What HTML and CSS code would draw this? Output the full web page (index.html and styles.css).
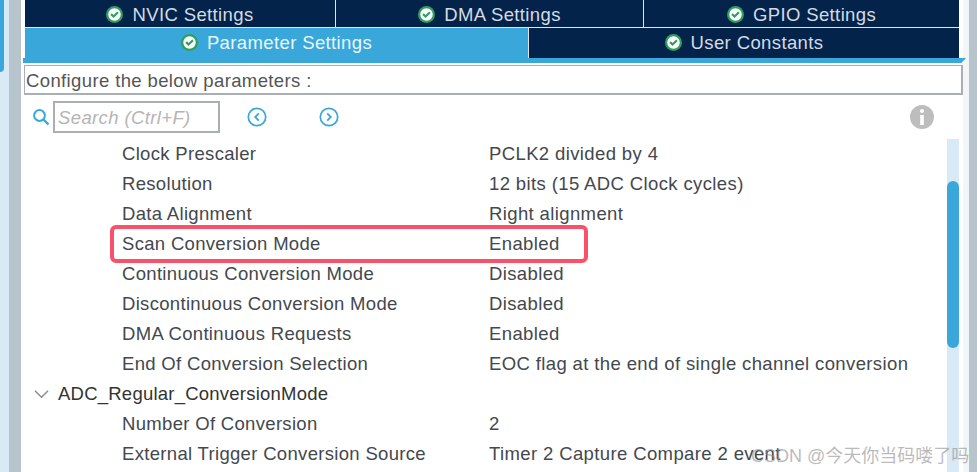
FILE: index.html
```html
<!DOCTYPE html>
<html lang="en">
<head>
  <meta charset="UTF-8"/>
  <title>Parameter Settings</title>
  <link rel="stylesheet" href="styles.css">
</head>
<body>
  <svg width="0" height="0" class="defs">
    <symbol id="ok" viewBox="0 0 18 18">
      <circle cx="9" cy="9" r="9" fill="#2f9e5f"/>
      <circle cx="9" cy="9" r="6.6" fill="#fff"/>
      <path d="M5.4 8.6 L8 11.2 L12.6 6.6" fill="none" stroke="#2f9e5f" stroke-width="2.3"/>
    </symbol>
  </svg>

  <div class="app">
    <div class="rail"><div class="rail-tab"></div></div>
    <div class="rail-grey"></div>

    <div class="main">
      <div class="tabs">
        <div class="tab-row">
          <div class="tab"><svg class="ok"><use href="#ok"/></svg>NVIC Settings</div>
          <div class="tab"><svg class="ok"><use href="#ok"/></svg>DMA Settings</div>
          <div class="tab"><svg class="ok"><use href="#ok"/></svg>GPIO Settings</div>
        </div>
        <div class="tab-row second">
          <div class="tab active"><svg class="ok"><use href="#ok"/></svg>Parameter Settings</div>
          <div class="tab"><svg class="ok"><use href="#ok"/></svg>User Constants</div>
        </div>
      </div>
      <div class="tab-line"></div>

      <div class="configure">Configure the below parameters :</div>

      <div class="toolbar">
        <svg class="search-icon" viewBox="0 0 18 18">
          <circle cx="7.5" cy="7.5" r="5.4" fill="none" stroke="#3aa7db" stroke-width="2"/>
          <path d="M11.5 11.5 L16.5 16.5" stroke="#3aa7db" stroke-width="2.4"/>
        </svg>
        <div class="search">Search (Ctrl+F)</div>
        <svg class="nav prev" viewBox="0 0 20 20">
          <circle cx="10" cy="10" r="8.7" fill="none" stroke="#3aa7db" stroke-width="1.7"/>
          <path d="M11.8 6.4 L8.2 10 L11.8 13.6" fill="none" stroke="#3aa7db" stroke-width="1.8"/>
        </svg>
        <svg class="nav next" viewBox="0 0 20 20">
          <circle cx="10" cy="10" r="8.7" fill="none" stroke="#3aa7db" stroke-width="1.7"/>
          <path d="M8.2 6.4 L11.8 10 L8.2 13.6" fill="none" stroke="#3aa7db" stroke-width="1.8"/>
        </svg>
        <svg class="info" viewBox="0 0 24 24">
          <circle cx="12" cy="12" r="12" fill="#bdbdbd"/>
          <circle cx="12" cy="6" r="2" fill="#fff"/>
          <rect x="10.2" y="10" width="3.6" height="10" fill="#fff"/>
        </svg>
      </div>

      <div class="params">
        <div class="list">
          <div class="row"><span class="name">Clock Prescaler</span><span class="value">PCLK2 divided by 4</span></div>
          <div class="row"><span class="name">Resolution</span><span class="value">12 bits (15 ADC Clock cycles)</span></div>
          <div class="row"><span class="name">Data Alignment</span><span class="value">Right alignment</span></div>
          <div class="row marked"><span class="name">Scan Conversion Mode</span><span class="value">Enabled</span><div class="mark"></div></div>
          <div class="row"><span class="name">Continuous Conversion Mode</span><span class="value">Disabled</span></div>
          <div class="row"><span class="name">Discontinuous Conversion Mode</span><span class="value">Disabled</span></div>
          <div class="row"><span class="name">DMA Continuous Requests</span><span class="value">Enabled</span></div>
          <div class="row"><span class="name">End Of Conversion Selection</span><span class="value">EOC flag at the end of single channel conversion</span></div>
          <div class="group">
            <svg class="chevron" viewBox="0 0 16 10"><path d="M1 1.5 L8 8.5 L15 1.5" fill="none" stroke="#8c8c8c" stroke-width="1.5"/></svg>
            ADC_Regular_ConversionMode
          </div>
          <div class="row"><span class="name">Number Of Conversion</span><span class="value">2</span></div>
          <div class="row"><span class="name">External Trigger Conversion Source</span><span class="value">Timer 2 Capture Compare 2 event</span></div>
        </div>
        <div class="scroll"><div class="thumb"></div></div>
      </div>
    </div>

    <div class="edge"></div>
    <div class="rail-grey right"></div>
  </div>

  <div class="watermark">CSDN @今天你当码喽了吗</div>
</body>
</html>
```

FILE: styles.css
```css
* { margin:0; padding:0; box-sizing:border-box }
body {
  width:977px; height:472px; overflow:hidden; position:relative;
  background:#fff; color:#43484e;
  font-family:"Liberation Sans",Arial,sans-serif; font-size:18.5px; letter-spacing:.38px;
}
.defs { position:absolute }
.app { display:flex; height:472px }

/* Left and right edges */
.rail { width:9px; background:#d9e9f6 }
.rail-tab { width:4px; height:72px; background:#3aa7db; border-radius:0 0 4px 0 }
.rail-grey { width:12px; background:#b8c4cc }
.rail-grey.right { width:8px }
.edge { width:6px; background:#f3f6f8 }

.main { flex:1; padding-left:3px; background:#fff; min-width:0 }

/* Tabs */
.tabs { margin-left:1px; width:934px }
.tab-row { display:grid; grid-template-columns:310px 307px 1fr; gap:1px; height:28px; background:#dfe5ea }
.tab-row.second { grid-template-columns:503px 1fr; height:31px }
.tab {
  display:flex; align-items:center; justify-content:center; gap:9px;
  background:#03234b; color:#d5dbe1; height:27px; padding-top:2px;
}
.second .tab { height:31px; padding:0 0 2px }
.tab.active { background:#3aa7db; color:#eaf6fc }
.ok { width:17px; height:17px; flex:none }
.tab-line { height:5px; margin:-1px -3px 0 -1px; background:#3aa7db; clip-path:polygon(0 0,100% 0,99.5% 100%,0 100%) }

.configure {
  height:30px; margin-top:2px; line-height:27px; padding:1px 0 0 1px;
  border:1px solid #a9afb4; border-width:1px 2px 2px 1px; color:#555;
  width:939px;
}

/* Toolbar */
.toolbar { display:flex; align-items:center; height:44px; padding-left:8px; position:relative }
.search-icon { width:18px; height:18px; flex:none }
.search {
  width:167px; height:32px; margin-left:3px; padding-left:3px; line-height:30px;
  border:2px solid #a9afb4; color:#b5b5b5; font-style:italic;
}
.nav { width:20px; height:20px; flex:none }
.prev { margin-left:27px }
.next { margin-left:52px }
.info { width:24px; height:24px; margin-left:auto; margin-right:29px }

/* Parameter list */
.params { display:flex; height:333px }
.list { flex:1; min-width:0 }
.row { display:flex; height:30px; line-height:30px; padding-left:98px; position:relative }
.name { width:367px; flex:none; letter-spacing:.32px }
.group { display:flex; align-items:center; gap:9px; height:30px; padding-left:10px; color:#333; letter-spacing:.23px }
.chevron { width:15px; height:10px; flex:none }
.mark {
  position:absolute; left:86px; top:-4px; width:478px; height:38px;
  border:4px solid #f8516a; border-radius:6px;
}
.scroll { width:12px; background:#d9e9f6; margin-right:4px }
.thumb { height:167px; margin-top:42px; background:#3aa7db; border-radius:6px }

.watermark {
  position:absolute; left:751px; top:441px;
  font-family:"Liberation Sans","Noto Sans CJK SC",sans-serif;
  font-size:18px; letter-spacing:0; color:rgba(140,140,140,.6); white-space:nowrap;
}
```
